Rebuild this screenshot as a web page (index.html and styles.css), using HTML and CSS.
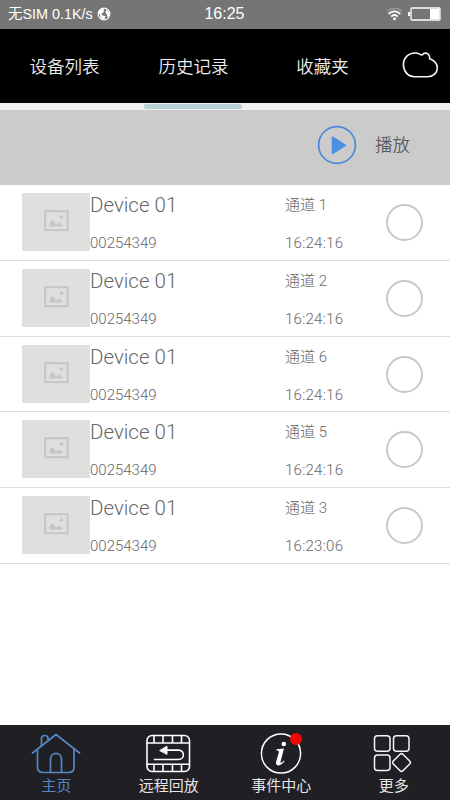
FILE: index.html
```html
<!DOCTYPE html>
<html lang="zh-CN">
<head>
    <meta charset="UTF-8">
    <meta name="viewport" content="width=device-width, initial-scale=1.0">
    <title>历史记录</title>
    <link rel="stylesheet" href="styles.css">
</head>
<body>
    <div class="app">
        <div class="status-bar">
            <div class="status-left">
                <span class="carrier">无SIM 0.1K/s</span>
                <svg width="14" height="14" viewBox="0 0 14 14">
                    <circle cx="7" cy="7" r="5.9" fill="none" stroke="#fff" stroke-width="1.2"/>
                    <path d="M1.5 5 4 2 7.5 1.5 6.5 3.5 7 5 4.5 6.5 5.5 8.5 8.5 9 8 11.500 6 12.500 3.500 10.500 3 8z" fill="#fff"/>
                    <path d="M9 2.500 12 5v4l-1.800 1.500L10 7.500 8.500 6z" fill="#fff"/>
                </svg>
            </div>
            <div class="clock">16:25</div>
            <div class="status-right">
                <svg width="17" height="14" viewBox="0 0 17 14" fill="none" stroke="#fff" stroke-width="1.8">
                    <path d="M1 4.2C5 .6 12 .6 16 4.2" stroke="#999" stroke-width="1.3"/>
                    <path d="M2.7 7C6 3.6 11 3.6 14.3 7M5.2 9.6c2-2 4.6-2 6.6 0"/>
                    <circle cx="8.5" cy="11.8" r="1.5" fill="#fff" stroke="none"/>
                </svg>
                <svg width="33" height="14" viewBox="0 0 33 14">
                    <rect x="0" y="5" width="2" height="4" fill="#fff"/>
                    <rect x="3" y="1" width="29" height="12" rx="1" fill="none" stroke="#fff" stroke-width="1.3"/>
                    <rect x="22" y="2" width="9.5" height="10" fill="#fff"/>
                </svg>
            </div>
        </div>

        <div class="tabs">
            <div class="tab">设备列表</div>
            <div class="tab active">历史记录</div>
            <div class="tab">收藏夹</div>
            <svg class="cloud" width="37" height="28" viewBox="0 0 37 28" fill="none" stroke="#f4f4f4" stroke-width="1.6">
                <path d="M12.500 25.700h13c6 0 9.800-3.900 9.800-8.900 0-4.200-3-7.300-7.600-9.100.2-3.300-1.500-5.600-4-5.600-1.400 0-2.600.6-3.300 1.700-1.200.3-1.900-.1-2.700-.7C16.400 2.300 15 2 13 2 6.200 2 1.400 7.200 1.400 13.600c0 6.600 4.600 12.100 11.100 12.100z"/>
            </svg>
        </div>
        <div class="indicator-track"><div class="indicator"></div></div>

        <div class="toolbar">
            <svg width="40" height="40" viewBox="0 0 40 40">
                <circle cx="20" cy="20" r="18.4" fill="none" stroke="#4a89d8" stroke-width="1.7"/>
                <path d="M15.5 12.2v16.2L28.5 20.3z" fill="#4a8fe2" stroke="#4a8fe2" stroke-width="1.5" stroke-linejoin="round"/>
            </svg>
            <span>播放</span>
        </div>

        <div class="list" id="list"></div>

        <div class="bottom-nav">
            <div class="nav-item active">
                <svg width="52" height="44" viewBox="0 0 52 44" fill="none" stroke="#5687c5" stroke-width="1.7" stroke-linecap="round" stroke-linejoin="round">
                    <path d="M2.5 23 26 4.5 49.5 23M7.5 19.5V37c0 3.5 2 5.5 5.5 5.5h25.5c3.5 0 5.5-2 5.5-5.5V19.5"/>
                    <path d="M20.5 42V29c0-7.5 11-7.5 11 0v13M11.5 15.5V8.2c0-3.6 6.5-3.6 6.5 0v1.8"/>
                </svg>
                <span>主页</span>
            </div>
            <div class="nav-item">
                <svg width="52" height="44" viewBox="0 0 52 44" fill="none" stroke="#fff" stroke-width="1.6" stroke-linecap="round">
                    <rect x="4" y="5.500" width="42.5" height="36" rx="5"/>
                    <path d="M4 13h42.5M4 34.200h42.5M11 6v7M20 6v7M29.5 6v7M38.5 6v7M11 34.500v6.500M20 34.500v6.500M29.500 34.500v6.500M38.500 34.500v6.500"/>
                    <path d="M11.500 29.500h24c6.500 0 6.500-9.400 0-9.400H22"/>
                    <path d="M17 20.400 24 16.200v7.800z" fill="#fff" stroke-width="1"/>
                </svg>
                <span>远程回放</span>
            </div>
            <div class="nav-item">
                <svg width="52" height="44" viewBox="0 0 52 44">
                    <circle cx="26" cy="23.5" r="19.6" fill="none" stroke="#fff" stroke-width="1.5"/>
                    <circle cx="28.8" cy="14" r="2.3" fill="#fff"/>
                    <path d="M21.5 19.300 29 18.400 25.600 31.600c-.5 1.800 1 1.500 3.300-1.100l.7.700c-4.200 5.600-9.800 5.400-8.400.4l2.600-9c.4-1.600-.7-1.900-2.500-2z" fill="#fff"/>
                </svg>
                <i class="badge"></i>
                <span>事件中心</span>
            </div>
            <div class="nav-item">
                <svg width="52" height="44" viewBox="0 0 52 44" fill="none" stroke="#f5f5f5" stroke-width="1.5">
                    <rect x="6.5" y="5.8" width="15.5" height="15.5" rx="3"/>
                    <rect x="25.5" y="5.8" width="15.5" height="15.5" rx="3"/>
                    <rect x="6.5" y="25" width="15.5" height="15.5" rx="3"/>
                    <rect x="26.7" y="25.7" width="13.6" height="13.6" rx="2" transform="rotate(45 33.5 32.5)"/>
                </svg>
                <span>更多</span>
            </div>
        </div>
    </div>

    <script>
        const records = [
            { channel: 1, time: '16:24:16' },
            { channel: 2, time: '16:24:16' },
            { channel: 6, time: '16:24:16' },
            { channel: 5, time: '16:24:16' },
            { channel: 3, time: '16:23:06' }
        ];

        document.getElementById('list').innerHTML = records.map(r => `
            <div class="row">
                <div class="thumb">
                    <svg width="25" height="22" viewBox="0 0 25 22">
                        <rect x="1.2" y="1.2" width="22.4" height="19" fill="none" stroke="#c5c5c5" stroke-width="2"/>
                        <path d="M5.5 16.5v-3l2-3 2 .5 2.500 3.500 3-2 4 3v1z" fill="#c5c5c5"/>
                        <circle cx="17.5" cy="7" r="1.8" fill="#c5c5c5"/>
                    </svg>
                </div>
                <div class="device">
                    <div class="name">Device 01</div>
                    <div class="serial">00254349</div>
                </div>
                <div class="info">
                    <div class="channel">通道 ${r.channel}</div>
                    <div class="time">${r.time}</div>
                </div>
                <div class="check"></div>
            </div>`).join('');
    </script>
</body>
</html>
```
FILE: styles.css
```css
* {
    box-sizing: border-box;
}
body {
    margin: 0;
    font-family: Roboto, "Noto Sans CJK SC", sans-serif;
    background-color: #fff;
}
.app {
    width: 450px;
    height: 800px;
    display: flex;
    flex-direction: column;
    overflow: hidden;
}
svg {
    display: block;
    flex: none;
}

/* Status bar */
.status-bar {
    height: 29px;
    flex: none;
    display: grid;
    grid-template-columns: 1fr auto 1fr;
    align-items: center;
    padding: 0 9px 1px 8px;
    background-color: #757575;
    color: #fff;
    font-family: "Liberation Sans", "Noto Sans CJK SC", sans-serif;
    font-size: 14.4px;
    line-height: 28px;
}
.status-left {
    display: flex;
    align-items: center;
    gap: 4px;
}
.clock {
    font-size: 16px;
}
.status-right {
    display: flex;
    align-items: center;
    justify-content: flex-end;
    gap: 5px;
}

/* Top tabs */
.tabs {
    height: 74px;
    flex: none;
    display: flex;
    align-items: center;
    padding-bottom: 2px;
    background-color: #000;
    color: #ededed;
    font-size: 17.5px;
    font-weight: 350;
}
.tab {
    width: 129px;
    text-align: center;
}
.cloud {
    margin-left: 15px;
}
.indicator-track {
    height: 7px;
    flex: none;
    padding-top: 1px;
    background-color: #efefef;
}
.indicator {
    width: 98px;
    height: 5px;
    margin-left: 144px;
    background-color: #b9d0d5;
    border-radius: 2px;
}

/* Play bar */
.toolbar {
    height: 75px;
    flex: none;
    display: flex;
    align-items: center;
    justify-content: flex-end;
    gap: 18px;
    padding: 0 40px 5px 0;
    background-color: #cbcbcb;
    color: #5c5c5c;
    font-size: 17.5px;
    font-weight: 350;
}
.toolbar span {
    padding-bottom: 3px;
}

/* Records */
.list {
    flex: 1;
    color: #666;
    font-weight: 300;
    font-size: 15px;
}
.row {
    height: 75.8px;
    display: flex;
    padding: 8px 27px 0 22px;
    border-bottom: 1px solid #dcdcdc;
}
.thumb {
    width: 68px;
    height: 58px;
    display: flex;
    align-items: center;
    justify-content: center;
    padding-bottom: 2px;
    background-color: #dfdfdf;
}
.device {
    width: 195px;
}
.name,
.channel {
    height: 24px;
    line-height: 24px;
}
.name {
    font-size: 20.5px;
}
.serial,
.time {
    margin-top: 14px;
    line-height: 24px;
}
.time {
    letter-spacing: 0.25px;
}
.check {
    width: 37px;
    height: 37px;
    margin: 11px 0 0 auto;
    border: 2px solid #c8c8c8;
    border-radius: 50%;
}

/* Bottom navigation */
.bottom-nav {
    height: 75px;
    flex: none;
    display: grid;
    grid-template-columns: repeat(4, 1fr);
    background-color: #201f24;
    color: #e6e6e6;
    font-size: 15px;
}
.nav-item {
    position: relative;
    display: flex;
    flex-direction: column;
    align-items: center;
    padding-top: 5px;
}
.nav-item span {
    margin-top: 1px;
    line-height: 22px;
}
.nav-item.active {
    color: #5687c5;
}
.badge {
    position: absolute;
    top: 8px;
    left: 65px;
    width: 12px;
    height: 12px;
    border-radius: 50%;
    background-color: #f60505;
}
```
